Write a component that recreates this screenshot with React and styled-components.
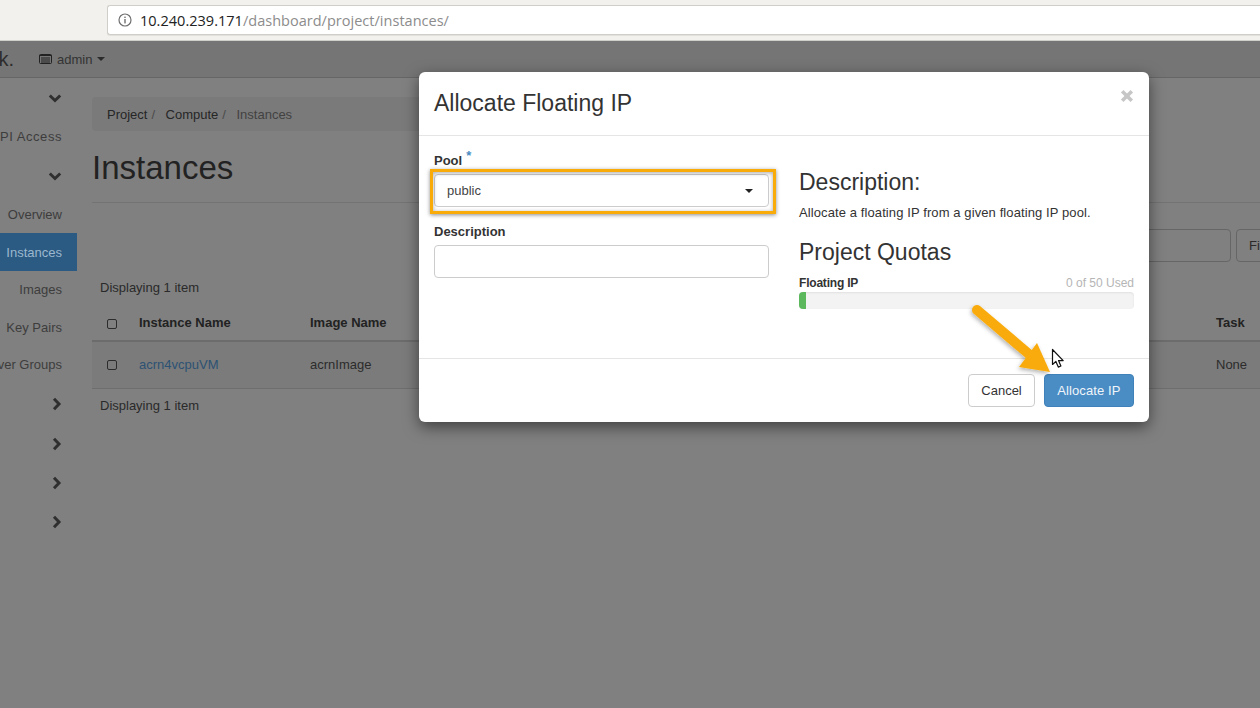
import React from "react";
import styled, { createGlobalStyle } from "styled-components";

const Global = createGlobalStyle`
  html, body { margin: 0; padding: 0; background: #808080; }
  * { box-sizing: border-box; }
  body { font-family: "Liberation Sans", Arial, sans-serif; }
`;

const Page = styled.div`
  position: relative;
  width: 1260px;
  height: 708px;
  overflow: hidden;
  display: flex;
  flex-direction: column;
  background: #808080;
  color: #2a2a2a;
  font-size: 13px;
`;

const BrowserBar = styled.div`
  height: 41px;
  flex: none;
  background: #f2f1ed;
  border-bottom: 1px solid #d0cfca;
  padding: 5px 0 6px 107px;
`;
const UrlBox = styled.div`
  height: 30px;
  background: #fff;
  border: 1px solid #cfcec9;
  border-right: none;
  border-radius: 3px 0 0 3px;
  display: flex;
  align-items: center;
  padding-left: 10px;
  gap: 8px;
  font-family: "Open Sans", sans-serif;
  font-size: 14.5px;
  letter-spacing: 0.02px;
  color: #222;
  box-shadow: 0 1px 0 #e2e1dc;
`;
const UrlPath = styled.span`
  color: #8c8c8c;
`;

const TopNav = styled.div`
  height: 37px;
  flex: none;
  background: #757575;
  border-bottom: 1px solid #666;
  display: flex;
  align-items: center;
  font-size: 13px;
  color: #333;
`;
const BrandClip = styled.div`
  width: 39px;
  overflow: hidden;
  display: flex;
  justify-content: flex-end;
  padding-right: 25px;
  flex: none;
  font-size: 20px;
  color: #2d2d2d;
  white-space: nowrap;
`;
const AdminMenu = styled.div`
  display: flex;
  align-items: center;
  gap: 5px;
`;
const Caret = styled.span`
  display: inline-block;
  width: 0;
  height: 0;
  border-left: ${p => p.$size || 4}px solid transparent;
  border-right: ${p => p.$size || 4}px solid transparent;
  border-top: ${p => p.$size || 4}px solid ${p => p.$color || "#2b2b2b"};
`;

const Body = styled.div`
  flex: 1;
  display: flex;
  min-height: 0;
`;
const Sidebar = styled.nav`
  width: 77px;
  flex: none;
  overflow: hidden;
  padding-top: 1px;
`;
const SideRow = styled.div`
  height: ${p => p.$h || 38}px;
  display: flex;
  align-items: center;
  justify-content: flex-end;
  padding-right: ${p => (p.$icon ? 15.5 : 15)}px;
  white-space: nowrap;
  letter-spacing: ${p => p.$track || 0}px;
  color: ${p => (p.$active ? "#9cb8cf" : "#3d3d3d")};
  background: ${p => (p.$active ? "#2b5a82" : "transparent")};
  font-size: 13px;
`;

const Main = styled.main`
  flex: 1;
  min-width: 0;
  padding: 19px 0 0 15px;
`;
const Breadcrumb = styled.div`
  height: 34px;
  width: 340px;
  background: #7a7a7a;
  border-radius: 4px 0 0 4px;
  display: flex;
  align-items: center;
  padding-left: 15px;
  font-size: 13px;
  color: #2a2a2a;
`;
const Crumb = styled.span`
  color: ${p => (p.$current ? "#424242" : "#262626")};
`;
const Sep = styled.span`
  color: #4a4a4a;
  padding: 0 10.5px 0 4px;
`;
const PageTitle = styled.h1`
  margin: 0;
  padding: 16px 0 15px;
  height: 72px;
  font-weight: 400;
  font-size: 33px;
  line-height: 41px;
  color: #222;
  border-bottom: 1px solid #737373;
`;
const FilterRow = styled.div`
  height: 76px;
  padding-top: 26px;
  display: flex;
  justify-content: flex-end;
  gap: 5px;
  margin-right: -20px;
`;
const FilterInput = styled.div`
  width: 120px;
  height: 33px;
  background: #808080;
  border: 1px solid #666;
  border-radius: 4px;
`;
const FilterButton = styled.div`
  width: 44px;
  height: 33px;
  border: 1px solid #666;
  border-radius: 4px;
  padding: 8px 0 0 12px;
  font-size: 13px;
  color: #2a2a2a;
`;
const Count = styled.div`
  padding-left: 8px;
  height: 18px;
  line-height: 18px;
  font-size: 13px;
  color: #2a2a2a;
`;
const columns = "32px 171px 906px 1fr";
const TableHead = styled.div`
  display: grid;
  grid-template-columns: ${columns};
  align-items: center;
  height: 39px;
  margin-top: 6px;
  padding-left: 15px;
  padding-top: 2px;
  font-weight: 700;
  font-size: 13px;
  color: #222;
  border-bottom: 2px solid #6c6c6c;
`;
const TableRow = styled.div`
  display: grid;
  grid-template-columns: ${columns};
  align-items: center;
  height: 47px;
  padding-left: 15px;
  padding-bottom: 2px;
  background: #7b7b7b;
  border-bottom: 1px solid #6e6e6e;
  font-size: 13px;
  color: #2c2c2c;
`;
const Check = styled.span`
  display: block;
  width: 10px;
  height: 10px;
  border: 1.5px solid #2c2c2c;
  border-radius: 2px;
  margin-top: 2px;
`;
const NameLink = styled.span`
  color: #2d5273;
`;
const FootCount = styled(Count)`
  margin-top: 8px;
`;

const Modal = styled.div`
  position: absolute;
  left: 419px;
  top: 72px;
  width: 730px;
  height: 350px;
  background: #fff;
  border-radius: 6px;
  box-shadow: 0 5px 15px rgba(0, 0, 0, 0.5);
  display: flex;
  flex-direction: column;
  color: #333;
`;
const ModalHead = styled.header`
  height: 64px;
  flex: none;
  border-bottom: 1px solid #e5e5e5;
  padding: 0 15.5px 0 15px;
  display: flex;
  align-items: center;
  justify-content: space-between;
`;
const ModalTitle = styled.h4`
  margin: 0;
  font-size: 23px;
  font-weight: 400;
  line-height: 1;
`;
const Close = styled.span`
  display: block;
  line-height: 0;
  margin-top: -15px;
`;
const ModalBody = styled.div`
  flex: 1;
  display: grid;
  grid-template-columns: 335px 335px;
  column-gap: 30px;
  padding: 15px 15px 0;
  border-bottom: 1px solid #e5e5e5;
`;
const Column = styled.div`
  display: flex;
  flex-direction: column;
`;
const RightColumn = styled(Column)`
  padding-top: 18px;
`;
const Label = styled.label`
  display: block;
  height: 23px;
  font-size: 13px;
  line-height: 20px;
  font-weight: 700;
  color: #333;
`;
const Req = styled.sup`
  color: #4a8bc2;
  font-size: 13px;
  line-height: 0;
  margin-left: 4px;
  font-weight: 700;
`;
const SelectWrap = styled.div`
  position: relative;
  margin-bottom: 15px;
`;
const Select = styled.div`
  height: 33px;
  border: 1px solid #ccc;
  border-radius: 4px;
  background: #fff;
  display: flex;
  align-items: center;
  justify-content: space-between;
  padding: 0 15px 0 12px;
  font-size: 13px;
  color: #444;
`;
const Highlight = styled.div`
  position: absolute;
  left: -4px;
  right: -7px;
  top: -5px;
  bottom: -7px;
  border: 3px solid #f9ab0a;
  box-shadow: 0 1px 4px rgba(0, 0, 0, 0.45), inset 0 1px 4px rgba(0, 0, 0, 0.35);
  pointer-events: none;
`;
const TextField = styled.div`
  height: 33px;
  border: 1px solid #ccc;
  border-radius: 4px;
  background: #fff;
`;
const Heading = styled.h3`
  margin: ${p => p.$top || 0}px 0 0;
  font-size: 23px;
  font-weight: 400;
  line-height: 26px;
  color: #333;
`;
const Para = styled.p`
  margin: 9px 0 0;
  height: 18px;
  font-size: 13px;
  line-height: 18px;
  letter-spacing: 0.1px;
  color: #333;
`;
const QuotaHead = styled.div`
  display: flex;
  justify-content: space-between;
  align-items: center;
  margin-top: 9px;
  height: 17px;
  font-size: 12px;
`;
const QuotaName = styled.span`
  font-weight: 700;
  letter-spacing: -0.2px;
  color: #333;
`;
const QuotaUsed = styled.span`
  color: #b5b5b5;
`;
const Progress = styled.div`
  margin-top: 1px;
  height: 17px;
  background: #f3f3f3;
  border-radius: 4px;
  overflow: hidden;
  box-shadow: inset 0 1px 2px rgba(0, 0, 0, 0.08);
`;
const ProgressFill = styled.div`
  height: 100%;
  background: #5cb85c;
`;
const ModalFoot = styled.footer`
  height: 63px;
  flex: none;
  display: flex;
  justify-content: flex-end;
  gap: 9px;
  padding: 15px 15px 0;
`;
const Button = styled.div`
  height: 33px;
  padding: 0 ${p => (p.$primary ? 12.5 : 12)}px;
  display: flex;
  align-items: center;
  border-radius: 4px;
  font-size: 13px;
  letter-spacing: ${p => (p.$primary ? 0.1 : 0)}px;
  border: 1px solid ${p => (p.$primary ? "#3f81b8" : "#ccc")};
  background: ${p => (p.$primary ? "#4a8cc4" : "#fff")};
  color: ${p => (p.$primary ? "#f0f5fa" : "#333")};
`;
const Overlay = styled.svg`
  position: absolute;
  left: 0;
  top: 0;
  pointer-events: none;
`;

const Down = () => (
  <svg width="14" height="10" viewBox="0 -0.5 14 10">
    <path d="M1.8 2 7 7 12.2 2" fill="none" stroke="#2f2f2f" strokeWidth="3" />
  </svg>
);
const Right = () => (
  <svg width="10" height="14" viewBox="0 0 10 14">
    <path d="M2 1.8 7 7 2 12.2" fill="none" stroke="#2f2f2f" strokeWidth="3" />
  </svg>
);

export default function App() {
  return (
    <Page>
      <Global />
      <BrowserBar>
        <UrlBox>
          <svg width="14" height="14" viewBox="0 0 14 14">
            <circle cx="7" cy="7" r="6" fill="none" stroke="#6f6f6f" strokeWidth="1.2" />
            <rect x="6.3" y="6" width="1.4" height="4.4" fill="#6f6f6f" />
            <rect x="6.3" y="3.6" width="1.4" height="1.4" fill="#6f6f6f" />
          </svg>
          <span>
            10.240.239.171<UrlPath>/dashboard/project/instances/</UrlPath>
          </span>
        </UrlBox>
      </BrowserBar>
      <TopNav>
        <BrandClip>k.</BrandClip>
        <AdminMenu>
          <svg width="13" height="10" viewBox="0 0 13 10">
            <rect x="0.5" y="0.5" width="12" height="9" rx="1" fill="none" stroke="#222" />
            <path d="M0.5 1.5h12M2 4h9M2 6h9M2 8h9" stroke="#222" strokeWidth="1" />
          </svg>
          <span>admin</span>
          <Caret />
        </AdminMenu>
      </TopNav>
      <Body>
        <Sidebar>
          <SideRow $h={38}><Down /></SideRow>
          <SideRow $h={39} $track={0.55}>API Access</SideRow>
          <SideRow $h={39}><Down /></SideRow>
          <SideRow $h={38}>Overview</SideRow>
          <SideRow $h={38} $active>Instances</SideRow>
          <SideRow $h={37}>Images</SideRow>
          <SideRow $h={38}>Key Pairs</SideRow>
          <SideRow $h={37}>Server Groups</SideRow>
          <SideRow $h={41} $icon><Right /></SideRow>
          <SideRow $h={39} $icon><Right /></SideRow>
          <SideRow $h={39} $icon><Right /></SideRow>
          <SideRow $h={40} $icon><Right /></SideRow>
        </Sidebar>
        <Main>
          <Breadcrumb>
            <Crumb>Project</Crumb><Sep>/</Sep>
            <Crumb>Compute</Crumb><Sep>/</Sep>
            <Crumb $current>Instances</Crumb>
          </Breadcrumb>
          <PageTitle>Instances</PageTitle>
          <FilterRow>
            <FilterInput />
            <FilterButton>Fi</FilterButton>
          </FilterRow>
          <Count>Displaying 1 item</Count>
          <TableHead>
            <Check />
            <span>Instance Name</span>
            <span>Image Name</span>
            <span>Task</span>
          </TableHead>
          <TableRow>
            <Check />
            <NameLink>acrn4vcpuVM</NameLink>
            <span>acrnImage</span>
            <span>None</span>
          </TableRow>
          <FootCount>Displaying 1 item</FootCount>
        </Main>
      </Body>

      <Modal>
        <ModalHead>
          <ModalTitle>Allocate Floating IP</ModalTitle>
          <Close>
            <svg width="14" height="14" viewBox="0 0 14 14">
              <path d="M2.2 2.2 11.8 11.8M11.8 2.2 2.2 11.8" stroke="#c6c6c6" strokeWidth="3.6" />
            </svg>
          </Close>
        </ModalHead>
        <ModalBody>
          <Column>
            <Label>Pool<Req>*</Req></Label>
            <SelectWrap>
              <Select>
                <span>public</span>
                <Caret $color="#222" $size={4.5} />
              </Select>
              <Highlight />
            </SelectWrap>
            <Label>Description</Label>
            <TextField />
          </Column>
          <RightColumn>
            <Heading>Description:</Heading>
            <Para>Allocate a floating IP from a given floating IP pool.</Para>
            <Heading $top={17}>Project Quotas</Heading>
            <QuotaHead>
              <QuotaName>Floating IP</QuotaName>
              <QuotaUsed>0 of 50 Used</QuotaUsed>
            </QuotaHead>
            <Progress>
              <ProgressFill style={{ width: "2%" }} />
            </Progress>
          </RightColumn>
        </ModalBody>
        <ModalFoot>
          <Button>Cancel</Button>
          <Button $primary>Allocate IP</Button>
        </ModalFoot>
      </Modal>

      <Overlay width="1260" height="708" viewBox="0 0 1260 708">
        <defs>
          <filter id="s" x="-20%" y="-20%" width="140%" height="140%">
            <feDropShadow dx="-1" dy="2" stdDeviation="2" floodColor="#000" floodOpacity="0.3" />
          </filter>
        </defs>
        <g filter="url(#s)">
          <path d="M977 310 1030 355" stroke="#f9ab0a" strokeWidth="10" strokeLinecap="round" />
          <path d="M1037 343 1050 372 1019 367Z" fill="#f9ab0a" />
        </g>
        <path d="M1052.5 349.5v15l3.4-3 2.4 5.6 2.6-1.1-2.4-5.4h4.7Z" fill="#fff" stroke="#111" strokeWidth="1.2" strokeLinejoin="round" />
      </Overlay>
    </Page>
  );
}
